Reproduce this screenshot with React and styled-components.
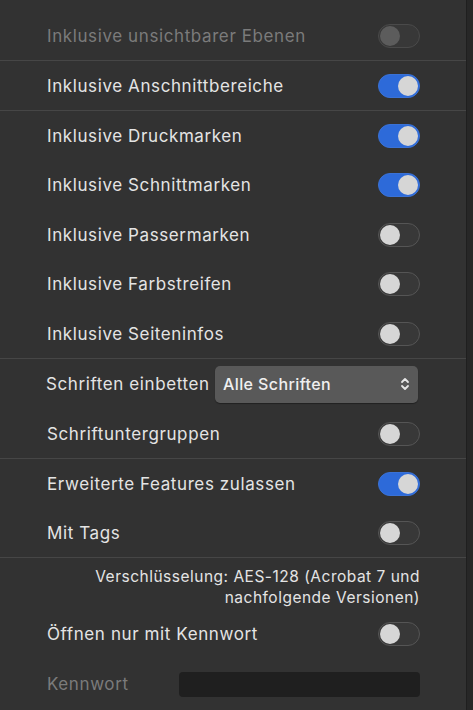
import React from "react";
import styled, { createGlobalStyle } from "styled-components";

const Global = createGlobalStyle`
  html, body {
    margin: 0;
    padding: 0;
    background: #323232;
  }
  body {
    font-family: Inter, "Noto Sans", "Liberation Sans", sans-serif;
    -webkit-font-smoothing: antialiased;
  }
`;

const Page = styled.div`
  display: flex;
  width: 473px;
  height: 710px;
  overflow: hidden;
  background: #323232;
`;

const Panel = styled.div`
  flex: 1;
  display: flex;
  flex-direction: column;
`;

const Edge = styled.div`
  width: 6px;
  background: #272727;
  border-left: 1px solid #1f1f1f;
`;

const Section = styled.div`
  display: flex;
  flex-direction: column;
  padding-top: ${p => p.top || 0}px;
  border-bottom: ${p => (p.last ? "none" : "1px solid #464646")};
`;

const Row = styled.div`
  display: flex;
  align-items: center;
  justify-content: space-between;
  height: ${p => p.h || 49.4}px;
  padding: 0 46px 0 ${p => p.left || 47}px;
`;

const Label = styled.span`
  font-size: 17px;
  letter-spacing: 0.6px;
  color: ${p => (p.disabled ? "#7b7b7b" : "#e4e4e4")};
`;

const Track = styled.div`
  position: relative;
  width: 42px;
  height: 24px;
  box-sizing: border-box;
  border-radius: 12px;
  background: ${p => (p.on ? "#2d6ad9" : "#383838")};
  border: 1px solid ${p => (p.on ? "#3a72d6" : p.disabled ? "#4a4a4a" : "#555555")};
`;

const Knob = styled.div`
  position: absolute;
  top: 1px;
  left: ${p => (p.on ? "19px" : "1px")};
  width: 20px;
  height: 20px;
  border-radius: 50%;
  background: ${p => (p.disabled ? "#5c5c5c" : "#d6d6d6")};
`;

const Toggle = ({ on, disabled }) => (
  <Track on={on ? 1 : 0} disabled={disabled}>
    <Knob on={on ? 1 : 0} disabled={disabled} />
  </Track>
);

const Select = styled.div`
  display: flex;
  align-items: center;
  justify-content: space-between;
  width: 203px;
  height: 37px;
  margin-right: 2px;
  box-sizing: border-box;
  padding: 0 8px 0 8px;
  border-radius: 5px;
  background: #595959;
  box-shadow: 0 1px 1px rgba(0, 0, 0, 0.35);
  color: #f0f0f0;
  font-size: 16px;
  font-weight: 500;
  letter-spacing: 0.4px;
`;

const Note = styled.div`
  padding: 8px 46px 0 47px;
  text-align: right;
  color: #e4e4e4;
  font-size: 15.5px;
  letter-spacing: 0.5px;
  line-height: 21px;
`;

const Field = styled.div`
  width: 241px;
  height: 25px;
  border-radius: 4px;
  background: #1f1f1f;
`;

const Chevrons = () => (
  <svg width="10" height="16" viewBox="0 0 10 16">
    <path d="M2 6 L5 3 L8 6" fill="none" stroke="#e6e6e6" strokeWidth="1.8" strokeLinecap="round" strokeLinejoin="round" />
    <path d="M2 10 L5 13 L8 10" fill="none" stroke="#e6e6e6" strokeWidth="1.8" strokeLinecap="round" strokeLinejoin="round" />
  </svg>
);

const ToggleRow = ({ label, on, disabled, h }) => (
  <Row h={h}>
    <Label disabled={disabled}>{label}</Label>
    <Toggle on={on} disabled={disabled} />
  </Row>
);

export default function App() {
  return (
    <Page>
      <Global />
      <Panel>
        <Section top={11}>
          <ToggleRow label="Inklusive unsichtbarer Ebenen" disabled h={49} />
        </Section>
        <Section>
          <ToggleRow label="Inklusive Anschnittbereiche" on />
        </Section>
        <Section>
          <ToggleRow label="Inklusive Druckmarken" on />
          <ToggleRow label="Inklusive Schnittmarken" on />
          <ToggleRow label="Inklusive Passermarken" />
          <ToggleRow label="Inklusive Farbstreifen" />
          <ToggleRow label="Inklusive Seiteninfos" />
        </Section>
        <Section>
          <Row left={46} h={50}>
            <Label>Schriften einbetten</Label>
            <Select>
              <span>Alle Schriften</span>
              <Chevrons />
            </Select>
          </Row>
          <ToggleRow label="Schriftuntergruppen" h={49} />
        </Section>
        <Section>
          <ToggleRow label="Erweiterte Features zulassen" h={49} on />
          <ToggleRow label="Mit Tags" h={49} />
        </Section>
        <Section last>
          <Note>
            Verschlüsselung: AES-128 (Acrobat 7 und
            <br />
            nachfolgende Versionen)
          </Note>
          <Row h={51}>
            <Label>Öffnen nur mit Kennwort</Label>
            <Toggle />
          </Row>
          <Row h={50}>
            <Label disabled>Kennwort</Label>
            <Field />
          </Row>
        </Section>
      </Panel>
      <Edge />
    </Page>
  );
}
